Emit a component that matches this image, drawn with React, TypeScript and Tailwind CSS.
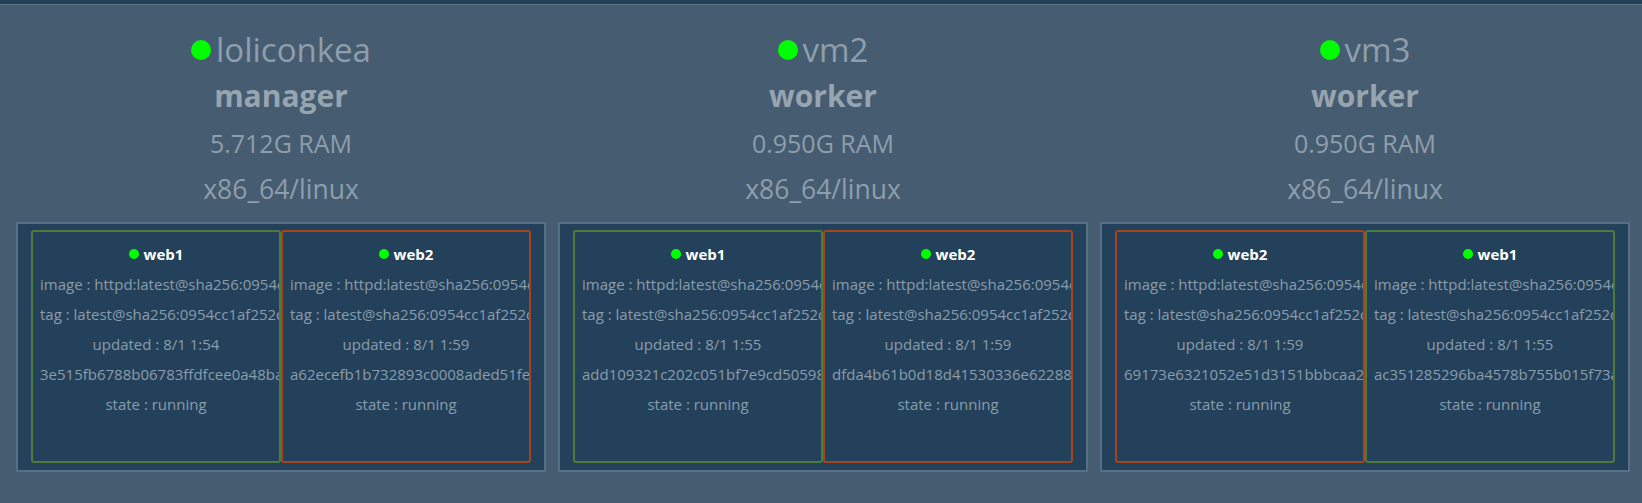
import React from 'react';

type Task = {
  name: string;
  image: string;
  tag: string;
  updated: string;
  id: string;
  state: string;
  ok: boolean;
};

type Node = {
  host: string;
  role: string;
  ram: string;
  arch: string;
  tasks: Task[];
};

const IMAGE = 'httpd:latest@sha256:0954cc1af252d824860b2c5dc0a10720af2b7a3d3435581ca788dff8480c7b96';
const TAG = 'latest@sha256:0954cc1af252d824860b2c5dc0a10720af2b7a3d3435581ca788dff8480c7b96';

const nodes: Node[] = [
  {
    host: 'loliconkea',
    role: 'manager',
    ram: '5.712G RAM',
    arch: 'x86_64/linux',
    tasks: [
      { name: 'web1', image: IMAGE, tag: TAG, updated: '8/1 1:54', id: '3e515fb6788b06783ffdfcee0a48ba9e2f1', state: 'running', ok: true },
      { name: 'web2', image: IMAGE, tag: TAG, updated: '8/1 1:59', id: 'a62ecefb1b732893c0008aded51fe7c41d', state: 'running', ok: false },
    ],
  },
  {
    host: 'vm2',
    role: 'worker',
    ram: '0.950G RAM',
    arch: 'x86_64/linux',
    tasks: [
      { name: 'web1', image: IMAGE, tag: TAG, updated: '8/1 1:55', id: 'add109321c202c051bf7e9cd505981a2b', state: 'running', ok: true },
      { name: 'web2', image: IMAGE, tag: TAG, updated: '8/1 1:59', id: 'dfda4b61b0d18d41530336e622889f0c', state: 'running', ok: false },
    ],
  },
  {
    host: 'vm3',
    role: 'worker',
    ram: '0.950G RAM',
    arch: 'x86_64/linux',
    tasks: [
      { name: 'web2', image: IMAGE, tag: TAG, updated: '8/1 1:59', id: '69173e6321052e51d3151bbbcaa21f7e', state: 'running', ok: false },
      { name: 'web1', image: IMAGE, tag: TAG, updated: '8/1 1:55', id: 'ac351285296ba4578b755b015f73a8d2', state: 'running', ok: true },
    ],
  },
];

function TaskCard({ task }: { task: Task }) {
  return (
    <div
      className={`w-[250px] h-[233px] border-2 rounded-[3px] pt-[7px] px-[7px] text-center overflow-hidden whitespace-nowrap text-[15px] leading-[30px] text-[#8b9cab] ${
        task.ok ? 'border-[#4d7b3b]' : 'border-[#a5441f]'
      }`}
    >
      <div className="flex items-center justify-center gap-[5px] font-bold text-white">
        <span className="w-[10px] h-[10px] rounded-full bg-[#00ff00]" />
        <span>{task.name}</span>
      </div>
      <div>image : {task.image}</div>
      <div>tag : {task.tag}</div>
      <div>updated : {task.updated}</div>
      <div>{task.id}</div>
      <div>state : {task.state}</div>
    </div>
  );
}

export default function App() {
  return (
    <div className="min-h-screen bg-[#465c70] font-['Open_Sans',sans-serif]">
      <div className="h-[4px] bg-[#22425a]" />
      <div className="h-[1px] bg-[#5b7488]" />

      <div className="flex pl-[16px] gap-[12px] pt-[23px]">
        {nodes.map((node) => (
          <div key={node.host} className="w-[530px] flex flex-col items-center">
            <div className="h-[44px] flex items-center text-[33px] text-[#8e9eac]">
              <span className="w-[20px] h-[20px] rounded-full bg-[#00ff00] mr-[5px]" />
              <span>{node.host}</span>
            </div>
            <div className="h-[48px] leading-[48px] text-[30px] font-bold text-[#97a5b1]">{node.role}</div>
            <div className="h-[46px] leading-[46px] text-[25px] text-[#8e9eac]">{node.ram}</div>
            <div className="h-[46px] leading-[46px] text-[26.5px] text-[#8e9eac]">{node.arch}</div>

            {/* task box */}
            <div className="mt-[10px] w-[530px] border-2 border-[#56708a] bg-[#23415a] flex justify-center pt-[6px] pb-[7px]">
              {node.tasks.map((t) => (
                <TaskCard key={t.name} task={t} />
              ))}
            </div>
          </div>
        ))}
      </div>
    </div>
  );
}
